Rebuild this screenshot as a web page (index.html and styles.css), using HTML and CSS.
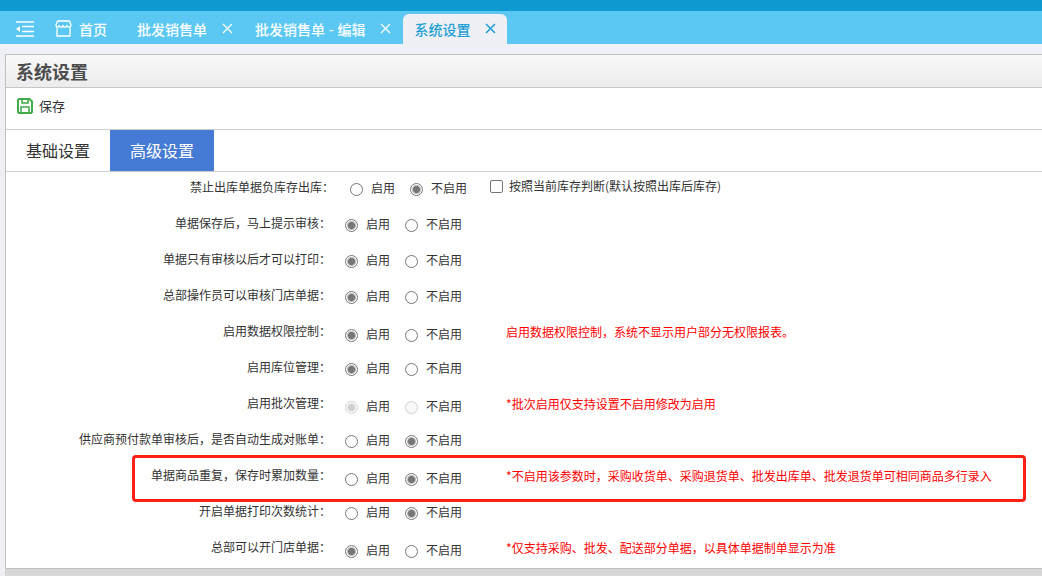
FILE: index.html
```html
<!DOCTYPE html>
<html lang="zh-CN">

<head>
  <meta charset="UTF-8" />
  <meta name="viewport" content="width=device-width, initial-scale=1.0" />
  <title>系统设置</title>
  <link rel="stylesheet" href="styles.css">
</head>

<body>
  <div class="top-strip"></div>

  <nav class="page-tabs">
    <button type="button" class="menu-btn" aria-label="收起菜单">
      <svg width="18" height="16" viewBox="0 0 18 16" fill="none" stroke="currentColor" stroke-width="1.5">
        <path d="M0 1h18M6 5.500h12M6 10.500h12M0 15h18" />
        <path d="M0 8l4-3v6z" fill="currentColor" stroke="none" />
      </svg>
    </button>
    <a href="#" class="page-tab home-tab">
      <svg width="17" height="17" viewBox="0 0 17 17" fill="none" stroke="currentColor" stroke-width="1.3" stroke-linejoin="round">
        <path d="M2.500 1h12L16 5c0 2.500-3 3-4 .5-1 2.500-3.500 2.500-4 0-.5 2.500-3 2.500-4 0C3 8 1 7.500 1 5z" />
        <path d="M2 7.500V16h13V7.500" />
      </svg>
      首页
    </a>
    <div class="page-tab">
      <a href="#">批发销售单</a>
      <button type="button" class="close-btn" aria-label="关闭">
        <svg width="11" height="11" viewBox="0 0 11 11" stroke="currentColor" stroke-width="1.2"><path d="M1 1l9 9M10 1l-9 9" /></svg>
      </button>
    </div>
    <div class="page-tab">
      <a href="#">批发销售单 - 编辑</a>
      <button type="button" class="close-btn" aria-label="关闭">
        <svg width="11" height="11" viewBox="0 0 11 11" stroke="currentColor" stroke-width="1.2"><path d="M1 1l9 9M10 1l-9 9" /></svg>
      </button>
    </div>
    <div class="page-tab active">
      <a href="#">系统设置</a>
      <button type="button" class="close-btn" aria-label="关闭">
        <svg width="11" height="11" viewBox="0 0 11 11" stroke="currentColor" stroke-width="1.5"><path d="M1 1l9 9M10 1l-9 9" /></svg>
      </button>
    </div>
  </nav>

  <main class="panel">
    <h1>系统设置</h1>

    <div class="toolbar">
      <button type="button" class="save-btn">
        <svg width="16" height="16" viewBox="0 0 16 16" fill="none" stroke="#42ab49" stroke-width="2">
          <path d="M2 1h10.500L15 3.500V14l-1 1H2l-1-1V2z" />
          <path d="M5 1v4h6V1M4 15V9h8v6" stroke-width="1.600" />
        </svg>
        保存
      </button>
    </div>

    <div class="setting-tabs">
      <button type="button">基础设置</button>
      <button type="button" class="active">高级设置</button>
    </div>

    <form class="settings">
      <div class="row wide">
        <span class="name" id="n1">禁止出库单据负库存出库：</span>
        <div class="options" role="radiogroup" aria-labelledby="n1">
          <label><input type="radio" name="negative"> 启用</label>
          <label><input type="radio" name="negative" checked> 不启用</label>
        </div>
        <label class="check"><input type="checkbox"> 按照当前库存判断(默认按照出库后库存)</label>
      </div>
      <div class="row">
        <span class="name" id="n2">单据保存后，马上提示审核：</span>
        <div class="options" role="radiogroup" aria-labelledby="n2">
          <label><input type="radio" name="remind" checked> 启用</label>
          <label><input type="radio" name="remind"> 不启用</label>
        </div>
      </div>
      <div class="row">
        <span class="name" id="n3">单据只有审核以后才可以打印：</span>
        <div class="options" role="radiogroup" aria-labelledby="n3">
          <label><input type="radio" name="print" checked> 启用</label>
          <label><input type="radio" name="print"> 不启用</label>
        </div>
      </div>
      <div class="row">
        <span class="name" id="n4">总部操作员可以审核门店单据：</span>
        <div class="options" role="radiogroup" aria-labelledby="n4">
          <label><input type="radio" name="audit" checked> 启用</label>
          <label><input type="radio" name="audit"> 不启用</label>
        </div>
      </div>
      <div class="row has-note">
        <span class="name" id="n5">启用数据权限控制：</span>
        <div class="options" role="radiogroup" aria-labelledby="n5">
          <label><input type="radio" name="permission" checked> 启用</label>
          <label><input type="radio" name="permission"> 不启用</label>
        </div>
        <p class="note">启用数据权限控制，系统不显示用户部分无权限报表。</p>
      </div>
      <div class="row">
        <span class="name" id="n6">启用库位管理：</span>
        <div class="options" role="radiogroup" aria-labelledby="n6">
          <label><input type="radio" name="location" checked> 启用</label>
          <label><input type="radio" name="location"> 不启用</label>
        </div>
      </div>
      <div class="row has-note">
        <span class="name" id="n7">启用批次管理：</span>
        <div class="options" role="radiogroup" aria-labelledby="n7">
          <label><input type="radio" name="batch" checked disabled> 启用</label>
          <label><input type="radio" name="batch" disabled> 不启用</label>
        </div>
        <p class="note">*批次启用仅支持设置不启用修改为启用</p>
      </div>
      <div class="row">
        <span class="name" id="n8">供应商预付款单审核后，是否自动生成对账单：</span>
        <div class="options" role="radiogroup" aria-labelledby="n8">
          <label><input type="radio" name="statement"> 启用</label>
          <label><input type="radio" name="statement" checked> 不启用</label>
        </div>
      </div>
      <div class="row has-note marked">
        <span class="name" id="n9">单据商品重复，保存时累加数量：</span>
        <div class="options" role="radiogroup" aria-labelledby="n9">
          <label><input type="radio" name="repeat"> 启用</label>
          <label><input type="radio" name="repeat" checked> 不启用</label>
        </div>
        <p class="note">*不启用该参数时，采购收货单、采购退货单、批发出库单、批发退货单可相同商品多行录入</p>
      </div>
      <div class="row">
        <span class="name" id="n10">开启单据打印次数统计：</span>
        <div class="options" role="radiogroup" aria-labelledby="n10">
          <label><input type="radio" name="count"> 启用</label>
          <label><input type="radio" name="count" checked> 不启用</label>
        </div>
      </div>
      <div class="row has-note">
        <span class="name" id="n11">总部可以开门店单据：</span>
        <div class="options" role="radiogroup" aria-labelledby="n11">
          <label><input type="radio" name="store" checked> 启用</label>
          <label><input type="radio" name="store"> 不启用</label>
        </div>
        <p class="note">*仅支持采购、批发、配送部分单据，以具体单据制单显示为准</p>
      </div>
    </form>
  </main>

  <footer class="bottom-bar"></footer>
</body>

</html>
```

FILE: styles.css
```css
* {
  margin: 0;
  padding: 0;
  box-sizing: border-box;
}

body {
  display: flex;
  flex-direction: column;
  min-height: 100vh;
  font-family: "Noto Sans CJK SC", sans-serif;
  font-size: 12px;
  background: #eff0f5;
  color: #333;
}

button {
  font: inherit;
  color: inherit;
  background: none;
  border: none;
  cursor: pointer;
}

a {
  color: inherit;
  text-decoration: none;
}

svg {
  display: block;
}

.top-strip {
  height: 11px;
  background: #0f9bd2;
}

/* Opened pages */
.page-tabs {
  display: flex;
  align-items: flex-end;
  height: 33px;
  padding-left: 16px;
  background: #5bc8f4;
  color: #fff;
  font-family: "Liberation Sans", "Noto Sans CJK SC", sans-serif;
  font-size: 14px;
  font-weight: 500;
}

.menu-btn {
  align-self: center;
  margin: 2px 10px 0 0;
}

.page-tab {
  display: flex;
  align-items: center;
  gap: 15px;
  height: 30px;
  padding: 0 11px 1px;
  white-space: nowrap;
}

.home-tab {
  gap: 7px;
  padding-right: 19px;
}

.page-tab.active {
  margin-left: 1px;
  background: #eff0f5;
  color: #1c9fd3;
  border-radius: 6px 6px 0 0;
}

/* Settings panel */
.panel {
  margin: 10px 0 0 5px;
  background: #fff;
  border: 1px solid #bfbfc1;
  border-right: none;
}

.panel h1 {
  padding-left: 10px;
  font-size: 18px;
  line-height: 32px;
  color: #4c4c4c;
  background: linear-gradient(#f9f9f9, #ececec);
  border-bottom: 1px solid #c6c6c6;
}

.toolbar {
  display: flex;
  align-items: center;
  height: 42px;
  padding: 0 11px 6px;
  border-bottom: 1px solid #ccc;
}

.save-btn {
  display: flex;
  align-items: center;
  gap: 6px;
  font-size: 13px;
}

.setting-tabs {
  display: flex;
  border-bottom: 1px solid #ccc;
}

.setting-tabs button {
  padding: 0 20px;
  font-size: 16px;
  line-height: 41px;
}

.setting-tabs .active {
  background: #467bd5;
  color: #fff;
}

/* Rows */
.row {
  display: flex;
  position: relative;
  height: 36px;
  white-space: nowrap;
}

.name {
  width: 325px;
  line-height: 30px;
  text-align: right;
}

.wide .name {
  width: 328px;
}

.options {
  display: flex;
  gap: 15px;
  padding-left: 14px;
  line-height: 32px;
}

.wide .options {
  padding-left: 16px;
}

.has-note .options {
  line-height: 36px;
}

.row label {
  display: flex;
  align-items: center;
  align-self: flex-start;
  gap: 8px;
}

.row .check {
  gap: 6px;
  margin-left: 23px;
  line-height: 28px;
}

.note {
  margin-left: 44px;
  line-height: 32px;
  color: #f00;
}

input {
  appearance: none;
  width: 13px;
  height: 13px;
  background: #fff;
  border: 1px solid #767676;
}

input[type="radio"] {
  margin-top: 2px;
  border-radius: 50%;
}

input[type="radio"]:checked {
  background: radial-gradient(circle, #767676 3px, #fff 5px);
}

input[type="radio"]:disabled {
  background: #f8f8f8;
  border-color: #d0d0d0;
}

input[type="radio"]:checked:disabled {
  background: radial-gradient(circle, #d0d0d0 3px, #fff 5px);
}

input[type="checkbox"] {
  border-radius: 2px;
}

input[type="checkbox"]:checked {
  background: #767676;
}

.marked::after {
  content: "";
  position: absolute;
  inset: -5px 16px -6px 126px;
  border: 3px solid #ff2015;
  border-radius: 4px;
  pointer-events: none;
}

.bottom-bar {
  flex: 1;
  margin-left: 5px;
  background:
    repeating-linear-gradient(90deg, rgba(0, 0, 0, 0.02) 0 1px, transparent 1px 4px),
    #d8d8d8;
}
```
